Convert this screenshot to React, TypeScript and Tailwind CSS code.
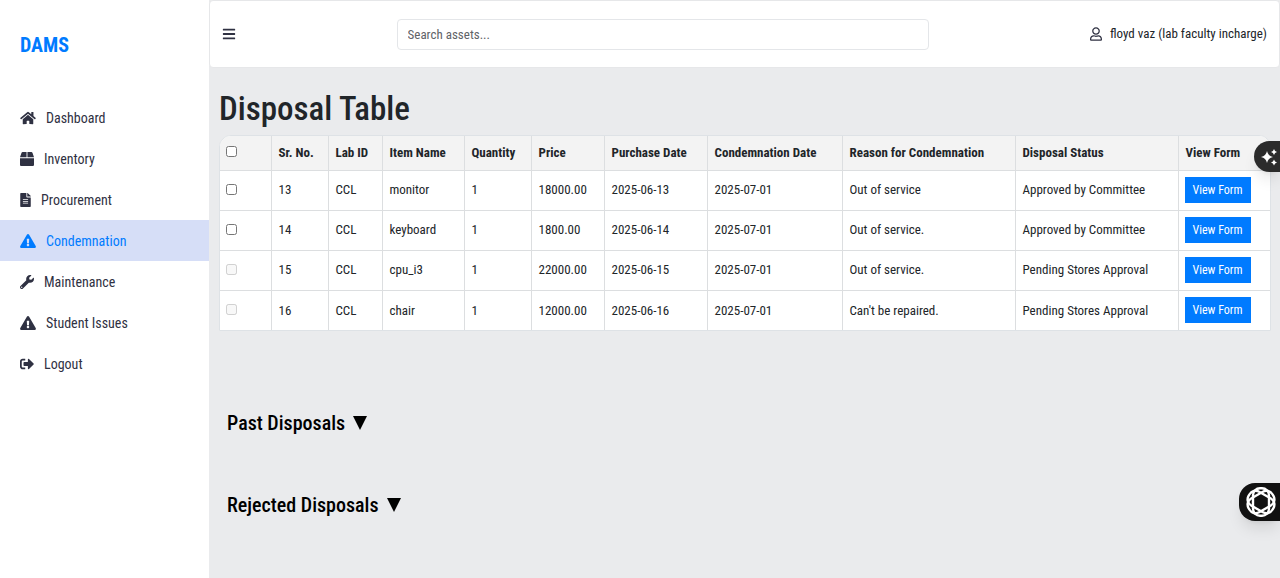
import { useState } from "react";
import {
  FaBars,
  FaBox,
  FaExclamationTriangle,
  FaFileAlt,
  FaHome,
  FaRegUser,
  FaSignOutAlt,
  FaWrench,
} from "react-icons/fa";
import type { IconType } from "react-icons";

const navItems: { label: string; icon: IconType; size: string; active?: boolean }[] = [
  { label: "Dashboard", icon: FaHome, size: "w-4" },
  { label: "Inventory", icon: FaBox, size: "w-3.5" },
  { label: "Procurement", icon: FaFileAlt, size: "w-[11px]" },
  { label: "Condemnation", icon: FaExclamationTriangle, size: "w-4", active: true },
  { label: "Maintenance", icon: FaWrench, size: "w-3.5" },
  { label: "Student Issues", icon: FaExclamationTriangle, size: "w-4" },
  { label: "Logout", icon: FaSignOutAlt, size: "w-3.5" },
];

const columns = [
  { label: "Sr. No.", width: "w-[57px]" },
  { label: "Lab ID", width: "w-[54px]" },
  { label: "Item Name", width: "w-[82px]" },
  { label: "Quantity", width: "w-[67px]" },
  { label: "Price", width: "w-[73px]" },
  { label: "Purchase Date", width: "w-[103px]" },
  { label: "Condemnation Date", width: "w-[135px]" },
  { label: "Reason for Condemnation", width: "w-[173px]" },
  { label: "Disposal Status", width: "w-[163px]" },
  { label: "View Form", width: "w-[92px]" },
];

const rows = [
  ["13", "CCL", "monitor", "1", "18000.00", "2025-06-13", "2025-07-01", "Out of service", "Approved by Committee"],
  ["14", "CCL", "keyboard", "1", "1800.00", "2025-06-14", "2025-07-01", "Out of service.", "Approved by Committee"],
  ["15", "CCL", "cpu_i3", "1", "22000.00", "2025-06-15", "2025-07-01", "Out of service.", "Pending Stores Approval"],
  ["16", "CCL", "chair", "1", "12000.00", "2025-06-16", "2025-07-01", "Can't be repaired.", "Pending Stores Approval"],
];

function Sidebar() {
  return (
    <aside className="w-[209px] shrink-0 bg-white">
      <a href="#" className="block px-5 pt-[30px] text-xl leading-[30px] font-bold text-[#007bff]">
        DAMS
      </a>
      <nav className="mt-[37px]">
        {navItems.map(({ label, icon: Icon, size, active }) => (
          <a
            key={label}
            href="#"
            className={`flex h-[41px] items-center gap-2.5 px-5 text-sm ${
              active ? "bg-[#d6def7] text-[#007bff]" : "text-[#2f3142]"
            }`}
          >
            <Icon className={`h-3.5 shrink-0 ${size}`} />
            {label}
          </a>
        ))}
      </nav>
    </aside>
  );
}

function Header() {
  return (
    <header className="flex h-[68px] items-center justify-between rounded border border-[#e6e7e9] bg-white px-3">
      <button type="button" aria-label="Toggle menu" className="text-[#2f3142]">
        <FaBars className="size-3.5" />
      </button>
      <input
        type="search"
        aria-label="Search assets"
        placeholder="Search assets..."
        className="h-[31px] w-[51%] rounded border border-[#e4e6e9] px-2.5 text-[13px] outline-none placeholder:text-[#5f6368]"
      />
      <a href="#" className="flex items-center gap-2 text-[13px]">
        <FaRegUser className="h-3.5 w-3 text-[#2f3142]" />
        floyd vaz (lab faculty incharge)
      </a>
    </header>
  );
}

function DisposalTable() {
  return (
    <div className="overflow-hidden rounded-t-xl border border-[#dee2e6] bg-white">
      <table className="w-full table-fixed border-collapse text-left text-[13px]">
        <thead className="bg-[#f3f3f3]">
          <tr className="h-[34px]">
            <th className="w-[51px] px-1.5">
              <input type="checkbox" aria-label="Select all" className="mb-0.5 block size-[11px]" />
            </th>
            {columns.map((c) => (
              <th key={c.label} className={`${c.width} border-l border-[#dcdee0] px-[7px] font-bold whitespace-nowrap`}>
                {c.label}
              </th>
            ))}
          </tr>
        </thead>
        <tbody>
          {rows.map((row, i) => (
            <tr key={row[0]} className="h-10 border-t border-[#dcdee0]">
              <td className="px-1.5">
                <input
                  type="checkbox"
                  aria-label={`Select item ${row[0]}`}
                  disabled={i > 1}
                  className="mb-0.5 block size-[11px]"
                />
              </td>
              {row.map((cell, j) => (
                <td key={j} className="border-l border-[#dcdee0] px-[7px] whitespace-nowrap">
                  {cell}
                </td>
              ))}
              <td className="border-l border-[#dcdee0] px-1.5">
                <button type="button" className="block h-[26px] bg-[#007bff] px-2 text-xs whitespace-nowrap text-white">
                  View Form
                </button>
              </td>
            </tr>
          ))}
        </tbody>
      </table>
    </div>
  );
}

function Section({ title }: { title: string }) {
  const [open, setOpen] = useState(false);
  return (
    <section className="h-[82px]">
      <button
        type="button"
        aria-expanded={open}
        onClick={() => setOpen(!open)}
        className="flex items-center gap-2 px-2 text-xl leading-[30px] font-medium text-black"
      >
        {title}
        <svg viewBox="0 0 14 14" className="size-3.5 fill-current" aria-hidden="true">
          <path d="M0 0h14L7 14z" />
        </svg>
      </button>
    </section>
  );
}

export default function App() {
  return (
    <div className="flex min-h-screen bg-[#eaebed] font-['Roboto_Condensed','Liberation_Sans_Narrow','Roboto',sans-serif] text-[#212529]">
      <Sidebar />
      <div className="min-w-0 flex-1">
        <Header />
        <main className="pt-[21px] pr-[9px] pl-2.5">
          <h1 className="mb-1.5 text-[33px] leading-10 font-medium">Disposal Table</h1>
          <DisposalTable />
          <div className="mt-[77px]">
            <Section title="Past Disposals" />
            <Section title="Rejected Disposals" />
          </div>
        </main>
      </div>
      <button
        type="button"
        aria-label="Assistant"
        className="fixed top-[141px] right-0 flex h-[31px] w-[26px] items-center rounded-l-full bg-[#2b2b2b] pl-1.5 text-white shadow-lg"
      >
        <svg viewBox="0 0 18 18" className="size-[18px] shrink-0 fill-current" aria-hidden="true">
          <path d="M7 3Q8 8 13 9Q8 10 7 15Q6 10 1 9Q6 8 7 3Z" />
          <path d="M14 1Q14.6 3.4 17 4Q14.6 4.6 14 7Q13.4 4.6 11 4Q13.4 3.4 14 1Z" />
          <path d="M14 11.5Q14.6 13.9 17 14.5Q14.6 15.1 14 17.5Q13.4 15.1 11 14.5Q13.4 13.9 14 11.5Z" />
        </svg>
      </button>
      <button
        type="button"
        aria-label="Open chat"
        className="fixed top-[483px] right-0 flex h-[38px] w-[41px] items-center rounded-l-2xl bg-[#111111] pl-[7px] text-white shadow-lg"
      >
        <svg viewBox="0 0 30 30" className="size-[30px] shrink-0 fill-none stroke-current stroke-[2.4]" aria-hidden="true">
          {[0, 60, 120].map((angle) => (
            <rect key={angle} x="7" y="1.2" width="16" height="27.6" rx="7" transform={`rotate(${angle} 15 15)`} />
          ))}
        </svg>
      </button>
    </div>
  );
}
